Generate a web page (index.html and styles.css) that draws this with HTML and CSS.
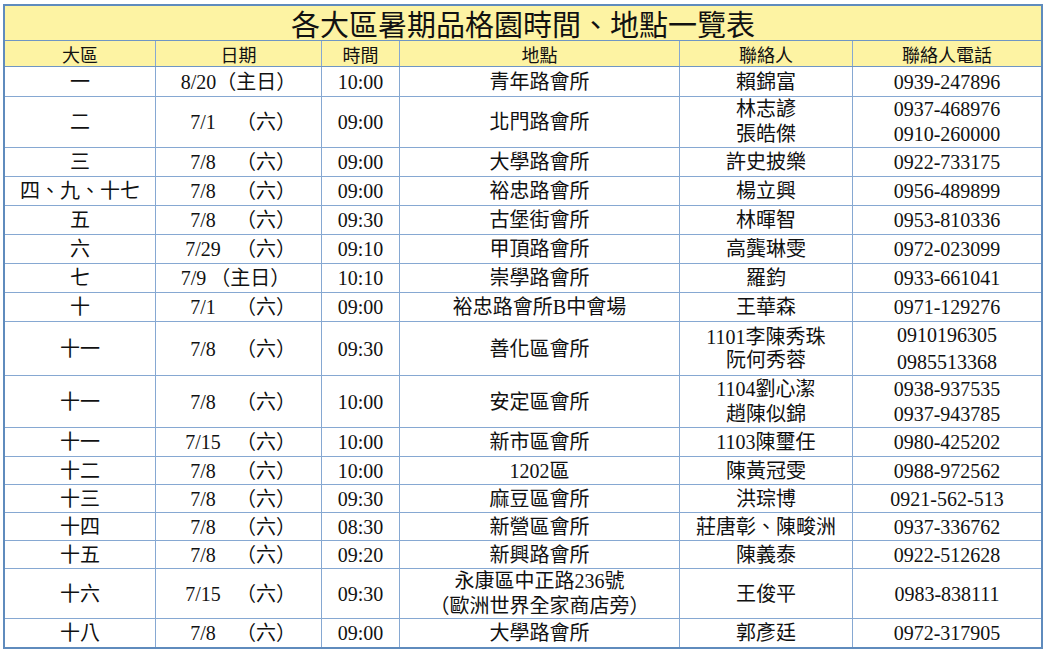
FILE: index.html
```html
<!DOCTYPE html>
<html lang="zh-Hant">
<head>
<meta charset="utf-8">
<title>各大區暑期品格園時間、地點一覽表</title>
<link rel="stylesheet" href="styles.css">
</head>
<body>
<div class="sheet">
  <div class="title">各大區暑期品格園時間、地點一覽表</div>
  <div class="row head">
    <div class="c">大區</div><div class="c">日期</div><div class="c">時間</div><div class="c">地點</div><div class="c">聯絡人</div><div class="c">聯絡人電話</div>
  </div>
  <div class="row h30">
    <div class="c">一</div><div class="c">8/20（主日）</div><div class="c">10:00</div><div class="c">青年路會所</div><div class="c">賴錦富</div><div class="c">0939-247896</div>
  </div>
  <div class="row h51">
    <div class="c">二</div><div class="c date"><span class="d">7/1</span><span class="w">（六）</span></div><div class="c">09:00</div><div class="c">北門路會所</div><div class="c multi"><span>林志諺</span><span>張皓傑</span></div><div class="c multi"><span>0937-468976</span><span>0910-260000</span></div>
  </div>
  <div class="row h29">
    <div class="c">三</div><div class="c date"><span class="d">7/8</span><span class="w">（六）</span></div><div class="c">09:00</div><div class="c">大學路會所</div><div class="c">許史披樂</div><div class="c">0922-733175</div>
  </div>
  <div class="row h29">
    <div class="c">四、九、十七</div><div class="c date"><span class="d">7/8</span><span class="w">（六）</span></div><div class="c">09:00</div><div class="c">裕忠路會所</div><div class="c">楊立興</div><div class="c">0956-489899</div>
  </div>
  <div class="row h29">
    <div class="c">五</div><div class="c date"><span class="d">7/8</span><span class="w">（六）</span></div><div class="c">09:30</div><div class="c">古堡街會所</div><div class="c">林暉智</div><div class="c">0953-810336</div>
  </div>
  <div class="row h29">
    <div class="c">六</div><div class="c date"><span class="d">7/29</span><span class="w">（六）</span></div><div class="c">09:10</div><div class="c">甲頂路會所</div><div class="c">高龔琳雯</div><div class="c">0972-023099</div>
  </div>
  <div class="row h29">
    <div class="c">七</div><div class="c sun"><span class="d9">7/9</span><span>（主日）</span></div><div class="c">10:10</div><div class="c">崇學路會所</div><div class="c">羅鈞</div><div class="c">0933-661041</div>
  </div>
  <div class="row h29">
    <div class="c">十</div><div class="c date"><span class="d">7/1</span><span class="w">（六）</span></div><div class="c">09:00</div><div class="c">裕忠路會所B中會場</div><div class="c">王華森</div><div class="c">0971-129276</div>
  </div>
  <div class="row h54">
    <div class="c">十一</div><div class="c date"><span class="d">7/8</span><span class="w">（六）</span></div><div class="c">09:30</div><div class="c">善化區會所</div><div class="c multi tight"><span>1101李陳秀珠</span><span>阮何秀蓉</span></div><div class="c multi loose"><span>0910196305</span><span>0985513368</span></div>
  </div>
  <div class="row h52">
    <div class="c">十一</div><div class="c date"><span class="d">7/8</span><span class="w">（六）</span></div><div class="c">10:00</div><div class="c">安定區會所</div><div class="c multi"><span>1104劉心潔</span><span>趙陳似錦</span></div><div class="c multi"><span>0938-937535</span><span>0937-943785</span></div>
  </div>
  <div class="row h29">
    <div class="c">十一</div><div class="c date"><span class="d">7/15</span><span class="w">（六）</span></div><div class="c">10:00</div><div class="c">新市區會所</div><div class="c">1103陳璽任</div><div class="c">0980-425202</div>
  </div>
  <div class="row h28">
    <div class="c">十二</div><div class="c date"><span class="d">7/8</span><span class="w">（六）</span></div><div class="c">10:00</div><div class="c">1202區</div><div class="c">陳黃冠雯</div><div class="c">0988-972562</div>
  </div>
  <div class="row h28">
    <div class="c">十三</div><div class="c date"><span class="d">7/8</span><span class="w">（六）</span></div><div class="c">09:30</div><div class="c">麻豆區會所</div><div class="c">洪琮博</div><div class="c">0921-562-513</div>
  </div>
  <div class="row h28">
    <div class="c">十四</div><div class="c date"><span class="d">7/8</span><span class="w">（六）</span></div><div class="c">08:30</div><div class="c">新營區會所</div><div class="c">莊唐彰、陳畯洲</div><div class="c">0937-336762</div>
  </div>
  <div class="row h28">
    <div class="c">十五</div><div class="c date"><span class="d">7/8</span><span class="w">（六）</span></div><div class="c">09:20</div><div class="c">新興路會所</div><div class="c">陳義泰</div><div class="c">0922-512628</div>
  </div>
  <div class="row h50">
    <div class="c">十六</div><div class="c date"><span class="d">7/15</span><span class="w">（六）</span></div><div class="c">09:30</div><div class="c multi"><span>永康區中正路236號</span><span>（歐洲世界全家商店旁）</span></div><div class="c">王俊平</div><div class="c">0983-838111</div>
  </div>
  <div class="row h28 last">
    <div class="c">十八</div><div class="c date"><span class="d">7/8</span><span class="w">（六）</span></div><div class="c">09:00</div><div class="c">大學路會所</div><div class="c">郭彥廷</div><div class="c">0972-317905</div>
  </div>
</div>
</body>
</html>
```

FILE: styles.css
```css
html, body {
  margin: 0;
  padding: 0;
  background: #ffffff;
}

body {
  font-family: "Liberation Serif", "Noto Sans CJK TC", serif;
  color: #111111;
  font-size: 20px;
}

.sheet {
  margin: 4px 0 0 3px;
  width: 1036px;
  border: 2px solid #5f8bbd;
  background: #ffffff;
}

.title {
  height: 35px;
  box-sizing: border-box;
  border-bottom: 1px solid #6f96c4;
  background: #fdf3a3;
  font-size: 29px;
  line-height: 34px;
  text-align: center;
  font-family: "Noto Sans CJK TC", sans-serif;
}

.row {
  display: grid;
  grid-template-columns: 151px 166px 78px 280px 173px 188px;
  box-sizing: border-box;
  border-bottom: 1px solid #86a8d2;
}

.row.last {
  border-bottom: none;
}

.head {
  height: 26px;
  background: #fdf3a3;
  font-size: 18px;
  border-bottom-color: #6f96c4;
}

.head .c {
  font-family: "Noto Sans CJK TC", sans-serif;
  line-height: 20px;
}

.h28 { height: 28px; }
.h29 { height: 29px; }
.h30 { height: 30px; }
.h50 { height: 50px; }
.h51 { height: 51px; }
.h52 { height: 52px; }
.h54 { height: 54px; }

.c {
  box-sizing: border-box;
  border-right: 1px solid #86a8d2;
  display: flex;
  flex-direction: column;
  align-items: center;
  justify-content: center;
  text-align: center;
  white-space: nowrap;
  line-height: 24px;
}

.c:last-child {
  border-right: none;
}

.multi {
  line-height: 25px;
}

.multi.tight {
  line-height: 23px;
}

.multi.loose {
  line-height: 27px;
}

.date {
  flex-direction: row;
  justify-content: flex-start;
}

.date .d {
  display: inline-block;
  width: 94px;
  margin-right: -14px;
  text-align: center;
}

.date .w {
  display: inline-block;
}

.sun {
  flex-direction: row;
  padding-right: 6px;
}

.sun .d9 {
  margin-right: 4px;
}
```
